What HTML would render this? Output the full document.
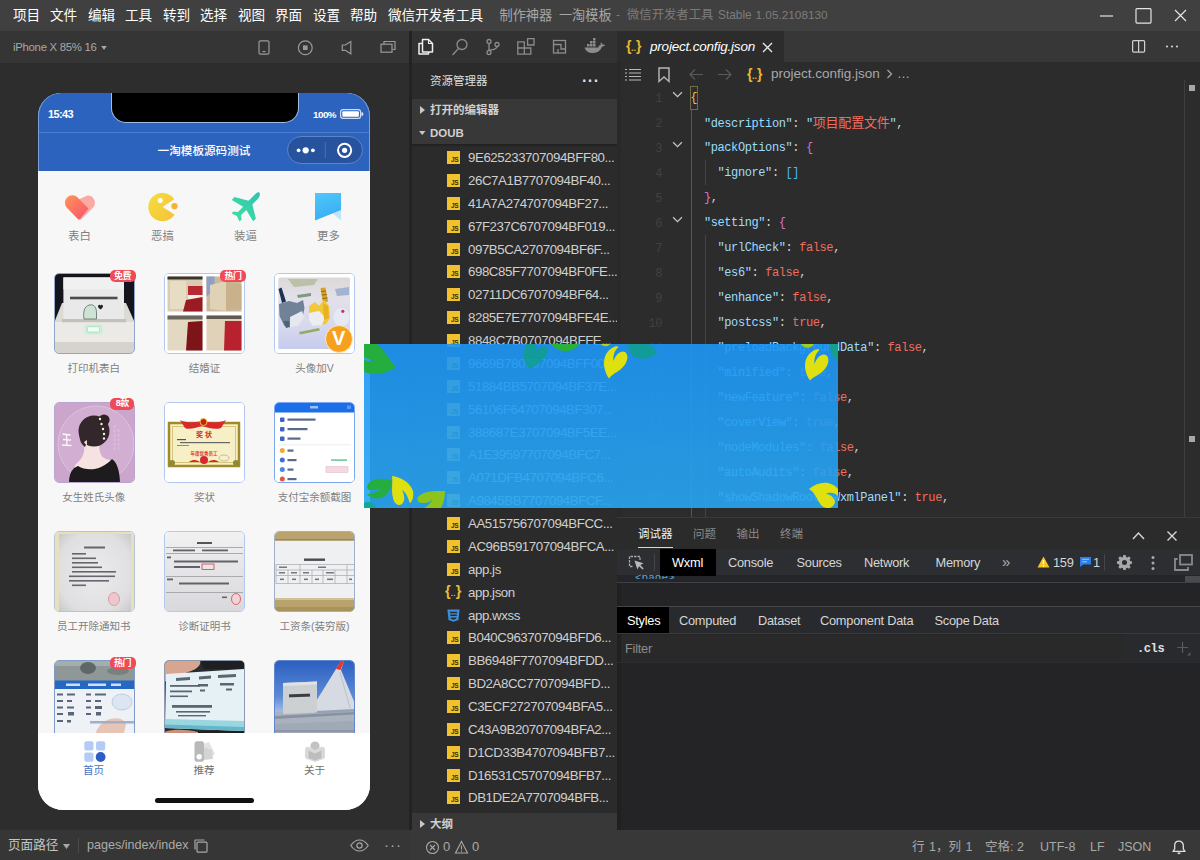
<!DOCTYPE html>
<html lang="zh-CN">
<head>
<meta charset="utf-8">
<title>微信开发者工具</title>
<style>
*{box-sizing:border-box;margin:0;padding:0}
html,body{width:1200px;height:860px;overflow:hidden;background:#2b2b2b}
body{font-family:"Liberation Sans","Noto Sans CJK SC",sans-serif;color:#ccc;font-size:13px;position:relative}
.abs,.abs>*,.frow>*,.cl>*{position:absolute}
i{font-style:normal}
svg{display:block;overflow:visible}
#menubar{left:0;top:0;width:1200px;height:31px;background:#404040}
#menubar span{top:0;line-height:31px;font-size:13.6px;color:#fff;white-space:nowrap}
#menubar span.t{color:#9a9a9a}
#simbar{left:0;top:31px;width:410px;height:32px;background:#353535}
#sim{left:0;top:63px;width:410px;height:767px;background:#2d2d2d}
#divider{left:409px;top:31px;width:3px;height:799px;background:#232323}
#side{left:412px;top:31px;width:205px;height:799px;background:#2b2b2b;overflow:hidden}
#editor{left:617px;top:31px;width:583px;height:486px;background:#2c2c2c;overflow:hidden}
#debug{left:617px;top:517px;width:583px;height:313px;background:#242426;overflow:hidden}
#simstatus{left:0;top:830px;width:410px;height:30px;background:#363636}
#status{left:410px;top:830px;width:790px;height:30px;background:#383838}
/* simulator */
#phone{left:38px;top:93px;width:332px;height:717px;border-radius:23px 23px 25px 25px;background:#f7f7f7;overflow:hidden}
#pstat{left:0;top:0;width:332px;height:40px;background:#2c63be;border-bottom:1px solid #4b7dd0}
#pnav{left:0;top:40px;width:332px;height:38px;background:#2c63be}
#notch{left:74px;top:-2px;width:186px;height:31px;background:#000;border-radius:0 0 14px 14px;box-shadow:0 0 0 1px #a4bde8}
.plabel{font-size:10.5px;color:#808080;white-space:nowrap;transform:translateX(-50%);line-height:14px}
.card{width:81px;height:81px;border-radius:5px;border:1px solid #b3c8ee;background:#fff;overflow:hidden}
.badge{width:26px;height:12px;border-radius:5px 5px 5px 5px;background:#ef4a58;color:#fff;font-size:9px;font-weight:bold;line-height:12px;text-align:center;white-space:nowrap;letter-spacing:-0.5px}
#ptab{left:0;top:640px;width:332px;height:77px;background:#fff}
/* sidebar */
.frow{left:0;width:205px;height:23px;line-height:23px;white-space:nowrap}
.frow .fn{left:56px;top:0;font-size:13.3px;color:#cfcfcf;letter-spacing:-0.44px}
.ijs{left:35px;top:5px;width:13px;height:13px;background:#f2c12e;color:#3a3000;font-size:6.5px;font-weight:bold;line-height:8px;padding:5px 0 0 4px;letter-spacing:-0.3px}
.ijson{left:33px;top:-0.5px;font-size:14.5px;color:#e8bd3c;font-weight:bold;letter-spacing:0px}
.ijson i{font-size:8px;letter-spacing:0.3px;position:relative;top:-0.5px}
.iwx{left:34px;top:4px;width:15px;height:15px}
/* editor */
.cl{left:0;width:583px;height:25px;line-height:25px}
.cl .ln{left:0;top:0.5px;width:45px;text-align:right;color:#414141;font-family:"Liberation Mono",monospace;font-size:12px;letter-spacing:-0.4px}
.cl .fold{left:55px;top:4.5px;width:11px;height:7px}
.cl .ct{top:0;white-space:pre;font-family:"Liberation Mono","Noto Sans CJK SC",monospace;font-size:12px;letter-spacing:-0.4px;color:#d4d4d4;margin-left:-617px}
.ct>*{position:static}
k{color:#9cdcfe}
s{color:#f26d5e;text-decoration:none}
.ct b{font-weight:normal}
b.y{color:#e8c53a}b.p{color:#da70d6}b.bl{color:#4fb5f5}
/* debugger */
.dt{font-size:12.8px;letter-spacing:-0.25px;color:#d6d6d6;white-space:nowrap;line-height:27px;top:0}
</style>
</head>
<body>
<div id="menubar" class="abs">
<span style="left:13px">项目</span><span style="left:50px">文件</span><span style="left:88px">编辑</span><span style="left:125px">工具</span><span style="left:163px">转到</span><span style="left:200px">选择</span><span style="left:238px">视图</span><span style="left:275px">界面</span><span style="left:313px">设置</span><span style="left:350px">帮助</span><span style="left:388px">微信开发者工具</span>
<span class="t" style="left:499.500px;font-size:13.200px;color:#a6a6a6;word-spacing:3px">制作神器 一淘模板</span><span class="t" style="left:616px;font-size:12.400px;color:#7c7c7c">-</span><span class="t" style="left:627px;font-size:12.350px;color:#7c7c7c">微信开发者工具</span><span class="t" style="left:718px;font-size:11.900px;color:#7c7c7c">Stable</span><span class="t" style="left:755.500px;font-size:11.800px;color:#7c7c7c">1.05.2108130</span>
<svg style="left:1098px;top:8px;width:90px;height:16px" viewBox="0 0 90 16"><g fill="none" stroke="#e4e4e4" stroke-width="1.2"><path d="M2 8h13"/><rect x="38" y="0.6" width="15" height="14.5" rx="1"/><path d="M77 2l11 11M88 2L77 13"/></g></svg>
</div>
<div id="simbar" class="abs">
<span style="left:13px;top:1px;line-height:31px;font-size:11.400px;color:#a8a8a8;white-space:nowrap;letter-spacing:-0.300px">iPhone X 85% 16</span><svg style="left:100.500px;top:15px;width:6px;height:4px" viewBox="0 0 7 5"><path d="M0 0h7L3.500 5z" fill="#a8a8a8"/></svg>
<svg style="left:258px;top:9px;width:140px;height:16px" viewBox="0 0 140 16"><g fill="none" stroke="#9a9a9a" stroke-width="1.2">
<rect x="1" y="0.8" width="10" height="13.4" rx="1.5"/><path d="M4.5 11.6h3"/>
<circle cx="47.3" cy="7.7" r="6.9"/><rect x="45" y="5.4" width="4.6" height="4.6" fill="#9a9a9a" stroke="none"/>
<path d="M92.800 1.500v12.300l-5.500-3.500h-3v-5.300h3z"/>
<path d="M126 4.2v-2.7h11v8h-2.6"/><rect x="123" y="4.2" width="11" height="8"/>
</g></svg>
</div>
<div id="sim" class="abs"></div>
<div id="phone" class="abs">
 <div id="pstat"></div>
 <div id="pnav"></div>
 <div id="notch"></div>
 <div style="left:0;top:0;width:332px;height:78px;box-shadow:inset 1px 0 0 #7f9fd8,inset -1px 0 0 #7f9fd8;border-radius:23px 23px 0 0"></div>
 <span style="left:10px;top:14.500px;font-size:11px;font-weight:bold;color:#fff;line-height:13px;letter-spacing:-0.650px">15:43</span>
 <span style="left:275px;top:15px;font-size:9.800px;font-weight:bold;color:#fff;line-height:13px;letter-spacing:-0.500px">100%</span>
 <svg style="left:302px;top:16px;width:24px;height:10px" viewBox="0 0 24 10"><rect x="0.6" y="0.6" width="20" height="8.8" rx="2.4" fill="none" stroke="#cfdcf2" stroke-width="1.2"/><rect x="2.3" y="2.3" width="16.6" height="5.4" rx="1" fill="#fff"/><rect x="21.4" y="3.2" width="1.8" height="3.6" rx="0.9" fill="#dfe8f7"/></svg>
 <span style="left:166px;top:50px;transform:translateX(-50%);font-size:11.6px;color:#fff;line-height:16px;white-space:nowrap;font-weight:500">一淘模板源码测试</span>
 <div style="left:248.5px;top:42.5px;width:76.5px;height:28px;border-radius:14px;background:#27529e;border:1px solid #5d84c8"></div>
 <svg style="left:248.5px;top:42.5px;width:76.5px;height:28px" viewBox="0 0 76.5 28"><path d="M38.3 6v16" stroke="#4a70b8" stroke-width="1"/><circle cx="18.7" cy="14.3" r="3.1" fill="#fff"/><circle cx="11.6" cy="14.3" r="1.9" fill="#fff"/><circle cx="25.9" cy="14.3" r="1.9" fill="#fff"/><circle cx="57.6" cy="14.3" r="6.6" fill="none" stroke="#fff" stroke-width="2"/><circle cx="57.6" cy="14.3" r="2.6" fill="#fff"/></svg>

 <!-- top icon row -->
 <svg style="left:26px;top:101px;width:32px;height:27px" viewBox="0 0 32 27"><defs><linearGradient id="gh" x1="0" y1="0" x2="1" y2="1"><stop offset="0" stop-color="#ff9458"/><stop offset="1" stop-color="#f8516c"/></linearGradient></defs><path d="M23.5 1.5a7.3 7.3 0 0 1 5.2 12.5L16.5 26 14 23.5 9 8z" fill="#f9aaa4"/><path d="M3.1 3.5a7.4 7.4 0 0 1 10.5 0L24.5 14.5 15.8 25.3a1.2 1.2 0 0 1-1.7 0L3.1 14a7.4 7.4 0 0 1 0-10.5z" fill="url(#gh)"/></svg>
 <svg style="left:110px;top:99px;width:31px;height:30px" viewBox="0 0 31 30"><defs><linearGradient id="gp" x1="0" y1="0" x2="1" y2="1"><stop offset="0" stop-color="#f5de3c"/><stop offset="1" stop-color="#f6c13c"/></linearGradient></defs><path d="M14.5 15L26.3 7.2A14.2 14.2 0 1 0 26.6 22.4z" fill="url(#gp)"/><circle cx="26.5" cy="14.2" r="3.1" fill="#f3b32c"/><circle cx="12.2" cy="8.6" r="2.5" fill="#fff"/></svg>
 <svg style="left:192px;top:98px;width:31px;height:31px" viewBox="0 0 31 31"><defs><linearGradient id="ga" x1="1" y1="0" x2="0" y2="1"><stop offset="0" stop-color="#2cc3b4"/><stop offset="1" stop-color="#3fe39d"/></linearGradient></defs><path d="M29.3 1.6c1.4 1.4.2 4.600-1.800 6.600L22.300 13.400l3.600 14.300-2.800 2.500-6.800-11.300-5.200 5.100.5 4.500-2.100 2-2.600-5.400-5.400-2.600 2-2.100 4.500.5 5.100-5.200L1.800 8.900l2.500-2.800L18.600 9.700 23.800 4.500c2-2 4.100-4.300 5.500-2.900z" fill="url(#ga)"/></svg>
 <svg style="left:276px;top:99px;width:28px;height:30px" viewBox="0 0 28 30"><defs><linearGradient id="gb" x1="0" y1="0" x2="0.3" y2="1"><stop offset="0" stop-color="#52c7fa"/><stop offset="1" stop-color="#37aef3"/></linearGradient></defs><path d="M1 1h26v27.500L14 17z" fill="#bfe4f8"/><path d="M1 1h26v17L1 28.500z" fill="url(#gb)"/></svg>
 <span class="plabel" style="left:41.5px;top:136px;font-size:11.400px">表白</span>
 <span class="plabel" style="left:124.5px;top:136px;font-size:11.400px">恶搞</span>
 <span class="plabel" style="left:207.5px;top:136px;font-size:11.400px">装逼</span>
 <span class="plabel" style="left:290.5px;top:136px;font-size:11.400px">更多</span>
 <!-- row 1 -->
 <div class="card" style="left:15.6px;top:180.3px;border-color:#8fa6c8"><svg viewBox="0 0 81 81" width="81" height="81" style="left:-1px;top:-1px;position:absolute">
  <rect width="81" height="81" fill="#14141c"/>
  <path d="M8 30h64l9 20v31H0V50z" fill="#dcdad5"/>
  <rect x="9.400" y="4.400" width="60.600" height="42" fill="#e9e9e9"/>
  <rect x="9.400" y="4.400" width="60.600" height="12" fill="#f0f0f0"/>
  <path d="M0 49h81v20H0z" fill="#eceae6"/>
  <path d="M8 46h64v3.200H8z" fill="#c4c1ba"/>
  <path d="M0 69h81v12H0z" fill="#d6d3ce"/>
  <path d="M0 75Q0 81 6 81H0zM81 75Q81 81 75 81h6z" fill="#2a2a30"/>
  <rect x="16" y="23.700" width="47.500" height="2.600" fill="#4c4c4c"/>
  <path d="M30 46c-1-6 0-13 5.500-14 5-1 7 3 7 8v6z" fill="#cfe3d4" stroke="#6a7a70" stroke-width="0.900"/><path d="M44.200 32.500c.8-1.200 2.300-.6 2.300.5 0-1.100 1.500-1.700 2.300-.5.900 1.500-1.100 3.100-2.300 4.100-1.200-1-3.200-2.600-2.300-4.100z" fill="#222"/>
  <rect x="30.400" y="51.400" width="18.200" height="10" rx="1.800" fill="#cfeeda"/><rect x="33.400" y="53.700" width="12.200" height="5.400" rx="1" fill="#f2fbf5" stroke="#9fdcb6" stroke-width="0.800"/>
 </svg></div>
 <div class="badge" style="left:71.500px;top:176.500px">免费</div>

 <div class="card" style="left:126.100px;top:180.300px"><svg viewBox="0 0 81 81" width="81" height="81" style="left:-1px;top:-1px;position:absolute">
  <rect width="81" height="81" fill="#fff"/>
  <rect x="3.500" y="3.500" width="35" height="35" fill="#d9ccb0"/><rect x="3.500" y="3.500" width="35" height="3" fill="#3a352c"/><path d="M6 8h16v28H6z" fill="#e7dcc4"/><path d="M24 13h14.500v9H24z" fill="#b82832"/><path d="M24 22h14.500v4H24z" fill="#f3efe8"/><path d="M22 27l16.500-3v14.500H19z" fill="#9a1c22"/>
  <rect x="42.500" y="3.500" width="35" height="35" fill="#cbb999"/><path d="M42.500 3.500h8v14l-8 6z" fill="#8fa0c4"/><path d="M46 12l16-4v30l-16-2z" fill="#dfd2b6"/><path d="M62 8l15.500 4v24L62 38z" fill="#c9b18c"/>
  <rect x="3.500" y="42.500" width="35" height="35" fill="#e3d8c2"/><rect x="3.500" y="42.500" width="35" height="4" fill="#6b665c"/><path d="M24 49l14.500-1v29.500H22z" fill="#7d1418"/>
  <rect x="42.500" y="42.500" width="35" height="35" fill="#e0d2b8"/><rect x="42.500" y="42.500" width="35" height="3.500" fill="#5e5a50"/><path d="M61 48h16.500v29.500H60z" fill="#b8222e"/>
 </svg></div>
 <div class="badge" style="left:182px;top:176.500px">热门</div>

 <div class="card" style="left:236.100px;top:180.300px"><svg viewBox="0 0 81 81" width="81" height="81" style="left:-1px;top:-1px;position:absolute">
  <rect width="81" height="81" fill="#fff"/>
  <defs><linearGradient id="gc" x1="0" y1="0" x2="0" y2="1"><stop offset="0" stop-color="#dcd8d8"/><stop offset="0.300" stop-color="#e2e0ea"/><stop offset="0.700" stop-color="#d6d8ee"/><stop offset="1" stop-color="#c6cbee"/></linearGradient><filter id="bl"><feGaussianBlur stdDeviation="0.700"/></filter></defs>
  <rect x="4.300" y="4.400" width="71.700" height="71.600" rx="1.500" fill="url(#gc)"/>
  <g filter="url(#bl)">
  <path d="M14 6h30l-4 6-20 2z" fill="#b9c2a8"/><path d="M61 16l14-2v8l-12 1z" fill="#a3b3d2"/><path d="M23 22l14-2 0 3-13 2z" fill="#7f9a80"/>
  <path d="M4.500 16l3-1.500 4.500 14-4 1.500z" fill="#1f3052"/>
  <path d="M5 31l10-3 8 2 6-3 1.500 8-2 10-8 6-10 2-5-10z" fill="#6f8298"/><path d="M16 44l12-6 2 6-6 9-8 1z" fill="#e6e8f0"/><path d="M9 48l6 0 1 6-4 1z" fill="#50627a"/>
  <path d="M46.500 15l5-.500 2.500 14-5 2z" fill="#d8a224"/><path d="M47 18.500l5-.500M47.800 22l5-.500M48.500 25.500l5-.500" stroke="#8a6a18" stroke-width="1"/>
  <path d="M35 33l6-4 4 4 5-6 5 6 1 12-4 6-12 2-5-8z" fill="#f1c83a"/><path d="M35 40l10-2 6 6-3 8-9 1-4-6z" fill="#eceef4"/><path d="M49 30l5 3 1 12-5 2z" fill="#e9b020"/>
  <path d="M59.500 44c0-6 4-9 8-9s8 4 8 9-3 9-8 9-8-3-8-9z" fill="#e6e8f2"/><circle cx="68.800" cy="38.300" r="1.600" fill="#c8325a"/>
  <path d="M25 59l20-4 1 2.500-20 4z" fill="#93ab62"/>
  </g>
 </svg></div>
 <div style="left:287.300px;top:231.500px;width:28px;height:28px;border-radius:14px;background:#f6a01e;border:1.500px solid #fdeab4"></div>
 <span style="left:294px;top:234px;font-size:20px;line-height:23px;font-weight:bold;color:#fff">V</span>

 <span class="plabel" style="left:55.800px;top:267.500px">打印机表白</span>
 <span class="plabel" style="left:166.500px;top:267.500px">结婚证</span>
 <span class="plabel" style="left:276.500px;top:267.500px">头像加V</span>

 <!-- row 2 -->
 <div class="card" style="left:15.600px;top:308.800px;border-color:#b9a6cf"><svg viewBox="0 0 81 81" width="81" height="81" style="left:-1px;top:-1px;position:absolute">
  <rect width="81" height="81" fill="#cca5cd"/>
  <circle cx="42" cy="42" r="38" fill="#d3aed3" stroke="#e0c8e0" stroke-width="0.800"/>
  <path d="M31 38C30 48 31 54 24 60C20 63 20 66 22 69L61 67C61 62 58 58 52 57C46 55 45 48 45 40Z" fill="#f6e3e1"/>
  <path d="M15 81C15 72 18 66 24 64C34 70 48 68 58 57C63 60 66 70 66 81Z" fill="#1d1b1e"/>
  <ellipse cx="40" cy="29" rx="15.500" ry="15.500" fill="#34272b"/><circle cx="50" cy="18" r="5.600" fill="#2e2226"/>
  <path d="M25.500 30C25 38 27 42 31 45L34 38Z" fill="#34272b"/>
  <path d="M30 40c1 2 2 3 3 3l0-5z" fill="#f3d9d6"/>
  <g fill="#f2f0e0"><circle cx="46" cy="17" r="1.200"/><circle cx="47.500" cy="22" r="1.200"/><circle cx="49" cy="27" r="1.200"/><circle cx="50" cy="32" r="1.200"/><circle cx="50" cy="36.500" r="1.200"/></g>
  <path d="M8.500 32l8 1M9 37.500l8 .5M8 43l9.500 .5M12.500 32.500l.5 10.500" stroke="#fff" stroke-width="1.300" fill="none" opacity="0.900"/>
  <path d="M60.500 23v26M64.500 27v20" stroke="#dcbcdc" stroke-width="1.600" stroke-dasharray="3 1.500"/>
 </svg></div>
 <div class="badge" style="left:72.300px;top:305.200px;width:24px;height:11.500px;line-height:11.500px">8款</div>

 <div class="card" style="left:126.100px;top:308.800px"><svg viewBox="0 0 81 81" width="81" height="81" style="left:-1px;top:-1px;position:absolute">
  <rect width="81" height="81" fill="#fff"/>
  <rect x="5" y="21" width="70" height="43" fill="#f7efc6" stroke="#a08a2a" stroke-width="2.500"/>
  <rect x="8.500" y="24.500" width="63" height="36" fill="none" stroke="#cdbb6a" stroke-width="0.800"/>
  <path d="M16 18c8 4 16 2 22 1 6 1 16 3 24-1l-5 8c-6 2-12 0-19-2-7 2-13 4-17 2z" fill="#d8282c"/><circle cx="39.500" cy="20" r="3.500" fill="#c8201f" stroke="#e9c24a" stroke-width="1"/>
  <text x="40" y="34.500" text-anchor="middle" font-size="7" font-weight="bold" fill="#d02a2a" font-family="Liberation Sans,Noto Sans CJK SC,sans-serif">奖 状</text>
  <rect x="13" y="37" width="9" height="1.200" fill="#555"/><rect x="16" y="40" width="50" height="1.200" fill="#666"/><rect x="13" y="43" width="12" height="1" fill="#888"/>
  <text x="40" y="52.500" text-anchor="middle" font-size="4.500" font-weight="bold" fill="#d43a2a" font-family="Liberation Sans,Noto Sans CJK SC,sans-serif">年度优秀员工</text>
  <circle cx="40" cy="58" r="4" fill="#d8282c"/><path d="M25 60c4-3 8-2 11 0zM44 60c3-2 7-3 11 0z" fill="#d8282c"/>
  <circle cx="8" cy="61" r="3" fill="#8d8a3a"/><circle cx="72" cy="61" r="3" fill="#8d8a3a"/>
  <ellipse cx="60" cy="56" rx="5" ry="3" fill="none" stroke="#b9b0a0" stroke-width="0.800"/>
 </svg></div>

 <div class="card" style="left:236.100px;top:308.800px;border-color:#7fa6ee"><svg viewBox="0 0 81 81" width="81" height="81" style="left:-1px;top:-1px;position:absolute">
  <rect width="81" height="81" fill="#fff"/>
  <rect width="81" height="10.500" fill="#1b6fe8"/><rect x="36" y="4" width="8" height="2.500" fill="#9cc0f6"/><rect x="73" y="3.500" width="4" height="3.500" fill="#5c97ef"/>
  <g fill="#3a62c8"><rect x="6" y="15.500" width="4.500" height="4.500" rx="1"/><rect x="6" y="25" width="4.500" height="4.500" rx="1"/><rect x="6" y="34.500" width="4.500" height="4.500" rx="1"/></g>
  <g fill="#5a6a8a"><rect x="13.500" y="16.500" width="28" height="2.200"/><rect x="13.500" y="26" width="20" height="2.200"/><rect x="13.500" y="35.500" width="13" height="2.200"/></g>
  <rect x="4" y="42.500" width="73" height="0.800" fill="#e6e8ee"/>
  <circle cx="8.300" cy="48.500" r="2.500" fill="#f2a83a"/><circle cx="8.300" cy="58" r="2.500" fill="#3d6fd6"/><circle cx="8.300" cy="67.500" r="2.500" fill="#4a86e8"/><circle cx="8.300" cy="77" r="2.500" fill="#e0583a"/>
  <g fill="#5a6a8a"><rect x="13.500" y="47.500" width="6" height="2.200"/><rect x="13.500" y="57" width="9" height="2.200"/><rect x="13.500" y="66.500" width="6" height="2.200"/><rect x="13.500" y="76" width="9" height="2.200"/></g>
  <rect x="57" y="57.200" width="16" height="1.800" fill="#7ccfa4"/><rect x="52" y="64.500" width="22" height="6" fill="#f3d9e2" stroke="#e8bccb" stroke-width="0.600"/>
 </svg></div>

 <span class="plabel" style="left:55.800px;top:396.500px">女生姓氏头像</span>
 <span class="plabel" style="left:166.500px;top:396.500px">奖状</span>
 <span class="plabel" style="left:276.500px;top:396.500px">支付宝余额截图</span>
 <!-- row 3 -->
 <div class="card" style="left:15.6px;top:438px;border-color:#b7c3d6"><svg viewBox="0 0 81 81" width="81" height="81" style="left:-1px;top:-1px;position:absolute">
  <defs><filter id="bl2"><feGaussianBlur stdDeviation="0.400"/></filter><radialGradient id="gn" cx="0.5" cy="0.5" r="0.7"><stop offset="0" stop-color="#ececee"/><stop offset="0.750" stop-color="#dfdfe1"/><stop offset="1" stop-color="#c9c9cc"/></radialGradient></defs>
  <rect width="81" height="81" fill="#e6e0bc"/>
  <rect x="5" y="3" width="72" height="77" fill="url(#gn)"/>
  <g fill="#66666c" filter="url(#bl2)"><rect x="30" y="15.500" width="21" height="2"/><rect x="18" y="22" width="14" height="1.600"/><rect x="18" y="26.500" width="24" height="1.600"/><rect x="18" y="31" width="26" height="1.600"/><rect x="18" y="35.500" width="30" height="1.600"/><rect x="18" y="40" width="44" height="1.600"/><rect x="15" y="44.500" width="46" height="1.600"/><rect x="15" y="49" width="40" height="1.600"/><rect x="18" y="53.500" width="14" height="1.600"/></g>
  <ellipse cx="60" cy="68" rx="5.500" ry="6.500" fill="#ecc8ce" stroke="#dc9aa6" stroke-width="1"/>
 </svg></div>

 <div class="card" style="left:126.100px;top:438px"><svg viewBox="0 0 81 81" width="81" height="81" style="left:-1px;top:-1px;position:absolute">
  <defs><linearGradient id="gd" x1="0" y1="0" x2="0" y2="1"><stop offset="0" stop-color="#f2f2f3"/><stop offset="0.350" stop-color="#e8e8ea"/><stop offset="1" stop-color="#d9d9dd"/></linearGradient></defs>
  <rect width="81" height="81" fill="url(#gd)"/>
  <rect x="33" y="11" width="15" height="2" fill="#555"/>
  <g stroke="#9a9aa0" stroke-width="0.800" fill="none"><path d="M2 16.500h77M2 22.500h77M2 45.500h77M2 61.500h77"/></g>
  <g fill="#62626a" filter="url(#bl2)"><rect x="9" y="18.500" width="22" height="1.800"/><rect x="38" y="18.500" width="26" height="1.800"/><rect x="3" y="25.500" width="4" height="1.800"/><rect x="10" y="29.500" width="64" height="2"/><rect x="10" y="35" width="26" height="2"/><rect x="3" y="47.500" width="6" height="1.800"/><rect x="15" y="51.500" width="50" height="2"/><rect x="58" y="65.500" width="5" height="1.600"/></g>
  <rect x="38" y="33" width="12" height="5.500" fill="none" stroke="#d4505a" stroke-width="0.900"/>
  <ellipse cx="72" cy="68" rx="4.500" ry="5.500" fill="#f1d4d8" stroke="#d9626f" stroke-width="1"/>
 </svg></div>

 <div class="card" style="left:236.100px;top:438px;border-color:#9fb0c8"><svg viewBox="0 0 81 81" width="81" height="81" style="left:-1px;top:-1px;position:absolute">
  <rect width="81" height="81" fill="#eef0f2"/>
  <rect width="81" height="9.500" fill="#b9a46e"/><rect y="8" width="81" height="1.500" fill="#9c8856"/>
  <rect y="67" width="81" height="14" fill="#b8a36c"/><rect y="67" width="81" height="2" fill="#d2c298"/><rect y="76" width="81" height="5" fill="#a8935c"/>
  <rect x="30" y="27.500" width="21" height="2.400" fill="#4a4a50"/>
  <g stroke="#a6a6ac" stroke-width="0.700" fill="none"><path d="M2 33.500h79M2 39h79M2 44.500h79M2 52.500h79M2 33.500v19M26 33.500v19M49 39v13.500M73 33.500v19M14 39v13.500M38 39v13.500M61 39v13.500"/></g>
  <g fill="#77777e"><rect x="5" y="35.500" width="8" height="1.500"/><rect x="44" y="35.500" width="8" height="1.500"/><rect x="5" y="41" width="6" height="1.500"/><rect x="17" y="41" width="6" height="1.500"/><rect x="29" y="41" width="6" height="1.500"/><rect x="52" y="41" width="8" height="1.500"/><rect x="6" y="47.500" width="4" height="1.600"/><rect x="18" y="47.500" width="4" height="1.600"/><rect x="30" y="47.500" width="4" height="1.600"/><rect x="41" y="47.500" width="4" height="1.600"/><rect x="53" y="47.500" width="6" height="1.600"/><rect x="75" y="47.500" width="3" height="1.600"/></g>
 </svg></div>

 <span class="plabel" style="left:55.800px;top:525.500px">员工开除通知书</span>
 <span class="plabel" style="left:166.500px;top:525.500px">诊断证明书</span>
 <span class="plabel" style="left:276.500px;top:525.500px">工资条(装穷版)</span>

 <!-- row 4 -->
 <div class="card" style="left:15.600px;top:567.300px;border-color:#7f9cc8"><svg viewBox="0 0 81 81" width="81" height="81" style="left:-1px;top:-1px;position:absolute">
  <rect width="81" height="81" fill="#eef1f5"/>
  <rect width="81" height="21" fill="#8f9896"/><path d="M0 0h81v6H0z" fill="#a5aeac"/><ellipse cx="34" cy="8" rx="8" ry="6" fill="#5f6867" filter="url(#bl2)"/><ellipse cx="64" cy="11" rx="11" ry="4" fill="#78817f" filter="url(#bl2)"/>
  <rect y="20.500" width="81" height="8.500" fill="#2568c4"/><g fill="#cfe0f6"><rect x="12" y="23.500" width="14" height="2.500"/><rect x="34" y="23.500" width="18" height="2.500"/><rect x="57" y="23.500" width="10" height="2.500"/></g>
  <g fill="#5a6678" filter="url(#bl2)"><rect x="3" y="33.500" width="6" height="2"/><rect x="13" y="33.500" width="8" height="2"/><rect x="32" y="33.500" width="5" height="2"/><rect x="41" y="33.500" width="11" height="2"/><rect x="3" y="40" width="6" height="2"/><rect x="13" y="40" width="5" height="2"/><rect x="32" y="40" width="5" height="2"/><rect x="41" y="40" width="6" height="2"/><rect x="3" y="46.500" width="6" height="2"/><rect x="13" y="46.500" width="7" height="2"/><rect x="32" y="46.500" width="5" height="2"/><rect x="41" y="46" width="7" height="3"/><rect x="3" y="53" width="6" height="2"/><rect x="14" y="52" width="6" height="3.500"/><rect x="32" y="53" width="5" height="2"/><rect x="42" y="52" width="5" height="3.500"/><rect x="3" y="60" width="6" height="2"/><rect x="13" y="60" width="4" height="2.500"/></g>
  <ellipse cx="68" cy="42" rx="10" ry="8" fill="#dbe6f2" stroke="#b4c6dc" stroke-width="0.800"/>
  <path d="M40 81c0-9 6-19 16-22 8-2 14 0 16 5l-4 17z" fill="#e6c4b6"/><path d="M18 81c6-5 16-8 26-7v7z" fill="#dcae9e"/>
  <rect x="36" y="61" width="45" height="2.500" fill="#9fb0c8"/>
 </svg></div>
 <div class="badge" style="left:71.500px;top:563.500px">热门</div>

 <div class="card" style="left:126.100px;top:567.300px;border-color:#8b9ab0"><svg viewBox="0 0 81 81" width="81" height="81" style="left:-1px;top:-1px;position:absolute">
  <rect width="81" height="81" fill="#2a2b2e"/>
  <path d="M0 0h36c2 5-4 10-12 12L0 22z" fill="#d8a690"/><path d="M36 0h45v9H40z" fill="#1e1f22"/>
  <path d="M2 14L80 9v62L1 68z" fill="#e6f1f5"/>
  <path d="M1 59l79 2v8L1 67z" fill="#9ad6e0"/><path d="M1 64.500l79 2.500v4L1 68z" fill="#62b8ca"/>
  <g fill="#5a6670" filter="url(#bl2)"><path d="M12 18l14-1v3l-14 1zM35 16.500l12-1v3l-12 1zM54 15l18-1v3l-18 1z"/><rect x="6" y="25" width="30" height="1.800"/><rect x="34" y="24" width="10" height="2.500"/><rect x="56" y="23" width="14" height="2.500"/><rect x="6" y="30.500" width="22" height="1.800"/><rect x="36" y="29.500" width="5" height="2"/><rect x="62" y="28.500" width="6" height="2"/><rect x="6" y="35.500" width="18" height="1.600"/><rect x="8" y="45" width="40" height="2.800"/><rect x="12" y="51" width="34" height="1.600"/><rect x="14" y="55" width="28" height="1.400"/></g>
  <path d="M0 72c8-3 22-3 34 0v9H0z" fill="#c9907c"/><path d="M34 71h47v10H34z" fill="#1e1f22"/>
 </svg></div>

 <div class="card" style="left:236.100px;top:567.300px;border-color:#5f86cf"><svg viewBox="0 0 81 81" width="81" height="81" style="left:-1px;top:-1px;position:absolute">
  <defs><linearGradient id="gs" x1="0" y1="0" x2="0" y2="1"><stop offset="0" stop-color="#2a5fc0"/><stop offset="0.450" stop-color="#5b8ad6"/><stop offset="0.700" stop-color="#b9cce8"/><stop offset="1" stop-color="#c9d3df"/></linearGradient></defs>
  <rect width="81" height="81" fill="url(#gs)"/>
  <path d="M0 52l81-4v33H0z" fill="#aab2bd"/><path d="M0 56l81-4v2.500L0 59z" fill="#8892a2"/><path d="M0 64l81-3v20H0z" fill="#a0a9b5"/><path d="M0 70h81v2H0z" fill="#8c96a6"/>
  <path d="M41 43L62 9l5-8h3l-3 9 14 34v6l-40 2z" fill="#d5dae3"/><path d="M62 9l5-8.500 3.500-.5-4 10z" fill="#e4372e"/><path d="M41 51l40-2v2.500l-40 2z" fill="#98a2b2"/><path d="M66 12l10 36" stroke="#b3bac8" stroke-width="0.800"/>
  <path d="M9 23l34-1.500 0 31-34 1.500z" fill="#cdd0d3"/><path d="M9 23l34-1.500v3l-34 1.500z" fill="#dfe1e3"/><rect x="15" y="34" width="21" height="3" fill="#3a3c42" transform="rotate(-2 25 35)" filter="url(#bl2)"/>
 </svg></div>
 <div id="ptab"></div>
 <svg style="left:45.500px;top:648px;width:22px;height:21px" viewBox="0 0 22 21"><g fill="#b4cbf6"><rect x="0.300" y="0.300" width="9.200" height="9.200" rx="2"/><rect x="12" y="0.300" width="9.200" height="9.200" rx="2"/><rect x="0.300" y="11.500" width="9.200" height="9.200" rx="2"/></g><circle cx="16.600" cy="16" r="4.900" fill="#2c5fc1"/></svg>
 <svg style="left:155.500px;top:648px;width:22px;height:21px" viewBox="0 0 22 21"><path d="M9 3l6-2 6 12-6 4z" fill="#e3e3e3"/><path d="M9 6l9 3 1 9-10 1z" fill="#d4d4d4"/><rect x="0.500" y="0.300" width="9.500" height="20.400" rx="2.500" fill="#b9b9b9"/><circle cx="5.200" cy="15.800" r="2.700" fill="#fff"/></svg>
 <svg style="left:266px;top:648px;width:22px;height:21px" viewBox="0 0 22 21"><circle cx="11" cy="5" r="4.600" fill="#c2c2c2"/><path d="M1 8.500c0-2 2-3 4-2.500l6 3 6-3c2-.5 4 .5 4 2.500v7c0 1.500-1 2.500-2.500 2.800L11 21l-7.500-2.700C2 18 1 17 1 15.500z" fill="#d9d9d9"/><path d="M4.500 9.500l6.500 3 6.500-3v7.500l-6.500 2.600-6.500-2.600z" fill="#bdbdbd"/></svg>
 <span class="plabel" style="left:55.500px;top:670px;color:#4873c6;font-size:10.600px">首页</span>
 <span class="plabel" style="left:166px;top:670px;font-size:10.600px;color:#707070">推荐</span>
 <span class="plabel" style="left:276.500px;top:670px;font-size:10.600px;color:#707070">关于</span>
 <div style="left:116.500px;top:705px;width:99px;height:5px;border-radius:3px;background:#111"></div>
</div>
<div id="simstatus" class="abs">
 <span style="left:8px;top:0;line-height:30px;font-size:12.600px;color:#c4c4c4;white-space:nowrap">页面路径</span>
 <svg style="left:62.500px;top:13.500px;width:7px;height:5px" viewBox="0 0 7 5"><path d="M0 0h7L3.500 5z" fill="#a8a8a8"/></svg>
 <div style="left:78px;top:8px;width:1px;height:15px;background:#4a4a4a"></div>
 <span style="left:87px;top:0;line-height:30px;font-size:12.600px;color:#ababab;white-space:nowrap">pages/index/index</span>
 <svg style="left:194px;top:9px;width:14px;height:14px" viewBox="0 0 14 14"><g fill="none" stroke="#a8a8a8" stroke-width="1.200"><rect x="3" y="3.200" width="10" height="10" rx="1"/><path d="M1 10.500V1.800a.8.800 0 0 1 .8-.8h8.700"/></g></svg>
 <svg style="left:350px;top:9px;width:19px;height:13px" viewBox="0 0 19 13"><path d="M.8 6.500C3.500 2.500 6.500 1 9.500 1s6 1.500 8.700 5.500C15.500 10.500 12.500 12 9.500 12S3.500 10.500.8 6.500z" fill="none" stroke="#a8a8a8" stroke-width="1.200"/><circle cx="9.500" cy="6.500" r="2.600" fill="none" stroke="#a8a8a8" stroke-width="1.200"/></svg>
 <span style="left:384px;top:0px;line-height:30px;font-size:15px;color:#aaa;letter-spacing:1px">···</span>
</div>
<div id="side" class="abs">
 <div style="left:0;top:0;width:205px;height:32px;background:#323232"></div>
 <svg style="left:0;top:0;width:205px;height:32px" viewBox="0 0 205 32">
  <g fill="none" stroke="#f0f0f0" stroke-width="1.500" stroke-linejoin="round"><path d="M10.500 8.500h6l4 4v8.500h-10z"/><path d="M16.500 8.500v4h4" stroke-width="1.100"/><path d="M10.500 12.500H7v10.500h9.500v-2"/></g>
  <g fill="none" stroke="#8c8c8c" stroke-width="1.300"><circle cx="50" cy="13.500" r="5"/><path d="M46.500 17.500l-6 6.500"/>
   <circle cx="77" cy="10.500" r="2"/><circle cx="77" cy="21.500" r="2"/><circle cx="85" cy="13.500" r="2"/><path d="M77 12.500v7M85 15.500c0 3-4 3-8 4"/>
   <path d="M105.800 10.800h6.500v6.200h-6.500zM105.800 17h6.500v6.200h-6.500zM112.300 17h6.500v6.200h-6.500zM115.600 7.600h6.400v6.400h-6.400z"/>
   <rect x="141.500" y="9.500" width="12" height="12.500"/><path d="M141.500 13.500h7.500v4.500h4.500M146 22v-4"/>
  </g>
  <path d="M172.500 16.500h13.800c.5-1.800 1.200-2.200 2.500-2.400-.4-.8-.4-1.700.2-2.600.9.600 1.400 1.300 1.500 2.100 1.100-.3 2 .0 2.600.5-.6 1.100-1.700 1.500-3 1.500-1.500 4.200-4.500 6.400-9 6.400-4.800 0-7.600-2-8.600-5.500zM175 13h2.500v2.500H175zM178 13h2.500v2.500H178zM181 13h2.500v2.500H181zM178 10h2.500v2.500H178zM181 10h2.500v2.500H181zM181 7h2.500v2.500H181z" fill="#8c8c8c"/>
 </svg>
 <span style="left:18px;top:42px;font-size:11.500px;line-height:16px;color:#dedede;white-space:nowrap">资源管理器</span>
 <span style="left:170px;top:35.500px;font-size:16px;line-height:28px;color:#ddd;letter-spacing:.5px;font-weight:bold">···</span>
 <div style="left:0;top:68px;width:205px;height:45px;background:#383838"></div>
 <div style="left:0;top:113px;width:205px;height:3px;background:linear-gradient(#1f1f1f,#2b2b2b)"></div>
 <svg style="left:7.500px;top:74.500px;width:5px;height:8px" viewBox="0 0 5 8"><path d="M0 0l5 4-5 4z" fill="#c8c8c8"/></svg>
 <span style="left:18px;top:71px;font-size:11.500px;line-height:16px;color:#d0d0d0;font-weight:bold;white-space:nowrap">打开的编辑器</span>
 <svg style="left:6.500px;top:100px;width:6.500px;height:4px" viewBox="0 0 8 5"><path d="M0 0h8L4 5z" fill="#c8c8c8"/></svg>
 <span style="left:18px;top:94px;font-size:11.500px;line-height:16px;color:#d0d0d0;font-weight:bold;white-space:nowrap">DOUB</span>
 <div class="abs" style="left:0;top:-31px;width:205px;height:860px">
<div class="frow" style="top:146.10px"><span class="ijs">JS</span><span class="fn">9E625233707094BFF80...</span></div>
<div class="frow" style="top:168.97px"><span class="ijs">JS</span><span class="fn">26C7A1B7707094BF40...</span></div>
<div class="frow" style="top:191.84px"><span class="ijs">JS</span><span class="fn">41A7A274707094BF27...</span></div>
<div class="frow" style="top:214.71px"><span class="ijs">JS</span><span class="fn">67F237C6707094BF019...</span></div>
<div class="frow" style="top:237.58px"><span class="ijs">JS</span><span class="fn">097B5CA2707094BF6F...</span></div>
<div class="frow" style="top:260.45px"><span class="ijs">JS</span><span class="fn">698C85F7707094BF0FE...</span></div>
<div class="frow" style="top:283.32px"><span class="ijs">JS</span><span class="fn">02711DC6707094BF64...</span></div>
<div class="frow" style="top:306.19px"><span class="ijs">JS</span><span class="fn">8285E7E7707094BFE4E...</span></div>
<div class="frow" style="top:329.06px"><span class="ijs">JS</span><span class="fn">8848C7B0707094BFFE...</span></div>
<div class="frow" style="top:351.93px"><span class="ijs">JS</span><span class="fn">9669B780707094BFF00...</span></div>
<div class="frow" style="top:374.80px"><span class="ijs">JS</span><span class="fn">51884BB5707094BF37E...</span></div>
<div class="frow" style="top:397.67px"><span class="ijs">JS</span><span class="fn">56106F64707094BF307...</span></div>
<div class="frow" style="top:420.54px"><span class="ijs">JS</span><span class="fn">388687E3707094BF5EE...</span></div>
<div class="frow" style="top:443.41px"><span class="ijs">JS</span><span class="fn">A1E39597707094BFC7...</span></div>
<div class="frow" style="top:466.28px"><span class="ijs">JS</span><span class="fn">A071DFB4707094BFC6...</span></div>
<div class="frow" style="top:489.15px"><span class="ijs">JS</span><span class="fn">A9845BB7707094BFCF...</span></div>
<div class="frow" style="top:512.02px"><span class="ijs">JS</span><span class="fn">AA515756707094BFCC...</span></div>
<div class="frow" style="top:534.89px"><span class="ijs">JS</span><span class="fn">AC96B591707094BFCA...</span></div>
<div class="frow" style="top:557.76px"><span class="ijs">JS</span><span class="fn">app.js</span></div>
<div class="frow" style="top:580.63px"><span class="ijson">{<i>..</i>}</span><span class="fn">app.json</span></div>
<div class="frow" style="top:603.50px"><svg class="iwx" viewBox="0 0 16 16"><path d="M1.5 1.5h13l-1.2 11.2L8 14.6l-5.3-1.9z" fill="#3c8fdc"/><path d="M4.2 4h7.6v1.6H4.2zM4.6 7h6.9v1.6H4.6zM5 10h6.1l-.2 1.4L8 12.4l-2.9-1z" fill="#2c2c2c"/></svg><span class="fn">app.wxss</span></div>
<div class="frow" style="top:626.37px"><span class="ijs">JS</span><span class="fn">B040C963707094BFD6...</span></div>
<div class="frow" style="top:649.24px"><span class="ijs">JS</span><span class="fn">BB6948F7707094BFDD...</span></div>
<div class="frow" style="top:672.11px"><span class="ijs">JS</span><span class="fn">BD2A8CC7707094BFD...</span></div>
<div class="frow" style="top:694.98px"><span class="ijs">JS</span><span class="fn">C3ECF272707094BFA5...</span></div>
<div class="frow" style="top:717.85px"><span class="ijs">JS</span><span class="fn">C43A9B20707094BFA2...</span></div>
<div class="frow" style="top:740.72px"><span class="ijs">JS</span><span class="fn">D1CD33B4707094BFB7...</span></div>
<div class="frow" style="top:763.59px"><span class="ijs">JS</span><span class="fn">D16531C5707094BFB7...</span></div>
<div class="frow" style="top:786.46px"><span class="ijs">JS</span><span class="fn">DB1DE2A7707094BFB...</span></div> </div>
 <div style="left:0;top:782px;width:205px;height:23px;background:#383838"></div>
 <svg style="left:7.500px;top:789px;width:5px;height:8px" viewBox="0 0 5 8"><path d="M0 0l5 4-5 4z" fill="#c8c8c8"/></svg>
 <span style="left:18px;top:785px;font-size:11.500px;line-height:16px;color:#d0d0d0;font-weight:bold;white-space:nowrap">大纲</span>
</div>
<div id="divider" class="abs"></div>
<div id="editor" class="abs">
 <div style="left:0;top:0;width:583px;height:31px;background:#373737"></div>
 <div style="left:0;top:0;width:167px;height:31px;background:#2c2c2c"></div>
 <span style="left:9px;top:0;line-height:30px;font-size:14px;font-weight:bold;color:#e8b830;letter-spacing:-0.500px;white-space:nowrap">{<i style="font-size:9px;letter-spacing:0">..</i>}</span>
 <span style="left:33px;top:0;line-height:31px;font-size:13.500px;font-style:italic;color:#fff;white-space:nowrap;letter-spacing:-0.200px">project.config.json</span>
 <svg style="left:145px;top:10.500px;width:11px;height:11px" viewBox="0 0 11 11"><path d="M1 1l9 9M10 1l-9 9" stroke="#e8e8e8" stroke-width="1.400" fill="none"/></svg>
 <svg style="left:514.500px;top:9px;width:50px;height:14px" viewBox="0 0 50 14"><g fill="none" stroke="#d0d0d0" stroke-width="1.200"><rect x="0.600" y="0.600" width="12" height="11.500" rx="1"/><path d="M6.600 0.600v11.500"/></g><g fill="#d0d0d0"><circle cx="35" cy="6.500" r="1.100"/><circle cx="40" cy="6.500" r="1.100"/><circle cx="45" cy="6.500" r="1.100"/></g></svg>
 <!-- breadcrumb -->
 <svg style="left:8px;top:36px;width:120px;height:16px" viewBox="0 0 120 16"><g stroke="#b8b8b8" stroke-width="1.200" fill="none"><path d="M4 2.500h12M4 6h12M4 9.500h12M4 13h12"/><path d="M0 2.500h2M0 6h2M0 9.500h2M0 13h2"/><path d="M34 1h10v13.500l-5-4.500-5 4.500z" stroke-width="1.400"/></g><g stroke="#5a5a5a" stroke-width="1.200" fill="none"><path d="M78 7.500H65M70 2.500l-5 5 5 5"/><path d="M93 7.500h13M101 2.500l5 5-5 5"/></g></svg>
 <span style="left:130px;top:31px;line-height:24px;font-size:14px;font-weight:bold;color:#e8b830;letter-spacing:-0.500px;white-space:nowrap">{<i style="font-size:9px;letter-spacing:0">..</i>}</span>
 <span style="left:154px;top:31px;line-height:24px;font-size:13.500px;color:#a8a8a8;white-space:nowrap;letter-spacing:0px">project.config.json</span>
 <svg style="left:269px;top:38px;width:7px;height:10px" viewBox="0 0 7 10"><path d="M1.500 1l4 4-4 4" stroke="#a8a8a8" stroke-width="1.200" fill="none"/></svg>
 <span style="left:280px;top:31px;line-height:24px;font-size:13px;color:#a8a8a8">…</span>
 <div style="left:0;top:31px;width:4px;height:455px;background:#292929"></div>
 <!-- guides -->
 <div style="left:74px;top:79px;width:1px;height:407px;background:#555"></div>
 <div style="left:88px;top:129px;width:1px;height:25px;background:#444"></div>
 <div style="left:88px;top:204px;width:1px;height:300px;background:#444"></div>
 <div style="left:72.500px;top:54.500px;width:8px;height:24px;border:1px solid #6e6a4a"></div>
 <div style="left:567px;top:49px;width:1px;height:437px;background:#3e3e3e"></div>
 <div style="left:572px;top:54px;width:6px;height:6px;background:#a8a8a8"></div>
 <div style="left:572px;top:405px;width:6px;height:6px;background:#a8a8a8"></div>
 <div class="abs" style="left:0;top:-31px;width:583px;height:600px">
<div class="cl" style="top:86.0px"><span class="ln">1</span><svg class="fold" viewBox="0 0 12 8"><path d="M1 1.5l5 5 5-5" fill="none" stroke="#c5c5c5" stroke-width="1.5"/></svg><span class="ct" style="left:690.3px"><b class="y">{</b></span></div>
<div class="cl" style="top:111.0px"><span class="ln">2</span><span class="ct" style="left:703.9px"><k>"description"</k>: <k>"</k><s style="font-size:13px;letter-spacing:-0.2px">项目配置文件</s><k>"</k>,</span></div>
<div class="cl" style="top:136.0px"><span class="ln">3</span><svg class="fold" viewBox="0 0 12 8"><path d="M1 1.5l5 5 5-5" fill="none" stroke="#c5c5c5" stroke-width="1.5"/></svg><span class="ct" style="left:703.9px"><k>"packOptions"</k>: <b class="p">{</b></span></div>
<div class="cl" style="top:161.0px"><span class="ln">4</span><span class="ct" style="left:717.5px"><k>"ignore"</k>: <b class="bl">[]</b></span></div>
<div class="cl" style="top:186.0px"><span class="ln">5</span><span class="ct" style="left:703.9px"><b class="p">}</b>,</span></div>
<div class="cl" style="top:211.0px"><span class="ln">6</span><svg class="fold" viewBox="0 0 12 8"><path d="M1 1.5l5 5 5-5" fill="none" stroke="#c5c5c5" stroke-width="1.5"/></svg><span class="ct" style="left:703.9px"><k>"setting"</k>: <b class="p">{</b></span></div>
<div class="cl" style="top:236.0px"><span class="ln">7</span><span class="ct" style="left:717.5px"><k>"urlCheck"</k>: <s>false</s>,</span></div>
<div class="cl" style="top:261.0px"><span class="ln">8</span><span class="ct" style="left:717.5px"><k>"es6"</k>: <s>false</s>,</span></div>
<div class="cl" style="top:286.0px"><span class="ln">9</span><span class="ct" style="left:717.5px"><k>"enhance"</k>: <s>false</s>,</span></div>
<div class="cl" style="top:311.0px"><span class="ln">10</span><span class="ct" style="left:717.5px"><k>"postcss"</k>: <s>true</s>,</span></div>
<div class="cl" style="top:336.0px"><span class="ln">11</span><span class="ct" style="left:717.5px"><k>"preloadBackgroundData"</k>: <s>false</s>,</span></div>
<div class="cl" style="top:361.0px"><span class="ln">12</span><span class="ct" style="left:717.5px"><k>"minified"</k>: <s>true</s>,</span></div>
<div class="cl" style="top:386.0px"><span class="ln">13</span><span class="ct" style="left:717.5px"><k>"newFeature"</k>: <s>false</s>,</span></div>
<div class="cl" style="top:411.0px"><span class="ln">14</span><span class="ct" style="left:717.5px"><k>"coverView"</k>: <s>true</s>,</span></div>
<div class="cl" style="top:436.0px"><span class="ln">15</span><span class="ct" style="left:717.5px"><k>"nodeModules"</k>: <s>false</s>,</span></div>
<div class="cl" style="top:461.0px"><span class="ln">16</span><span class="ct" style="left:717.5px"><k>"autoAudits"</k>: <s>false</s>,</span></div>
<div class="cl" style="top:486.0px"><span class="ln">17</span><span class="ct" style="left:717.5px"><k>"showShadowRootInWxmlPanel"</k>: <s>true</s>,</span></div> </div>
</div>
<div id="debug" class="abs">
 <div style="left:0;top:0;width:4px;height:313px;background:#202021"></div>
 <div style="left:0;top:0;width:583px;height:32px;background:#2b2b2b;border-top:1px solid #3a3a3a"></div>
 <span style="left:21px;top:9px;font-size:11.500px;line-height:16px;color:#f0f0f0;white-space:nowrap">调试器</span>
 <div style="left:21px;top:30px;width:35px;height:1px;background:#d8d8d8"></div>
 <span style="left:76px;top:9px;font-size:11.500px;line-height:16px;color:#8a8a8a;white-space:nowrap">问题</span>
 <span style="left:119.500px;top:9px;font-size:11.500px;line-height:16px;color:#8a8a8a;white-space:nowrap">输出</span>
 <span style="left:163px;top:9px;font-size:11.500px;line-height:16px;color:#8a8a8a;white-space:nowrap">终端</span>
 <svg style="left:515px;top:14px;width:46px;height:10px" viewBox="0 0 46 10"><g fill="none" stroke="#d8d8d8" stroke-width="1.400"><path d="M1 8l5.500-6L12 8"/><path d="M35.500 0.500l9 9M44.500 0.500l-9 9"/></g></svg>
 <!-- devtools toolbar -->
 <div style="left:0;top:32px;width:583px;height:27px;background:#2d2e31"></div>
 <div style="left:0;top:58px;width:583px;height:8px;background:#242528;border-bottom:1px solid #404145"></div>
 <div style="left:568px;top:59px;width:15px;height:6px;background:#494a4d"></div>
 <span style="left:18px;top:56px;font-family:'Liberation Mono',monospace;font-size:11px;line-height:10px;height:6px;overflow:hidden;color:#5da3cf">&lt;page&gt;</span>
 <svg style="left:11px;top:38px;width:16px;height:16px" viewBox="0 0 16 16"><path d="M12 5V1.500H1.500V11.500H5" fill="none" stroke="#a8a8a8" stroke-width="1.300" stroke-dasharray="2.500 1"/><path d="M6.500 5.500l2.800 9 1.800-3.300 3.400 3.400 1.200-1.200-3.400-3.400 3.200-1.700z" fill="#b8b8b8"/></svg>
 <div style="left:37px;top:37px;width:1px;height:17px;background:#454545"></div>
 <div style="left:43px;top:32px;width:56px;height:27px;background:#000"></div>
 <span class="dt" style="left:55px;top:32px;color:#fff">Wxml</span>
 <span class="dt" style="left:111px;top:32px">Console</span>
 <span class="dt" style="left:179.500px;top:32px">Sources</span>
 <span class="dt" style="left:247px;top:32px">Network</span>
 <span class="dt" style="left:318.500px;top:32px">Memory</span>
 <span class="dt" style="left:385px;top:31px;font-size:15px;color:#b0b0b0">»</span>
 <svg style="left:420px;top:38.500px;width:13px;height:12px" viewBox="0 0 13 12"><path d="M6.500 0.500l6 11H.5z" fill="#f4c520"/><path d="M6.500 4v4M6.500 9v1.400" stroke="#fff" stroke-width="1.300"/></svg>
 <span class="dt" style="left:436px;top:32px;letter-spacing:-0.300px">159</span>
 <svg style="left:463px;top:39.500px;width:11px;height:10px" viewBox="0 0 11 10"><path d="M0 0h11v7.500H3.500L0 10z" fill="#2b7de9"/><path d="M2 2.300h7M2 4.800h5" stroke="#9cc6ff" stroke-width="1"/></svg>
 <span class="dt" style="left:476px;top:32px">1</span>
 <div style="left:487px;top:37px;width:1px;height:17px;background:#454545"></div>
 <svg style="left:499.500px;top:37.500px;width:15px;height:15px" viewBox="0 0 16 16"><path d="M6.700 0h2.600l.4 2.100 1.300.6 1.800-1.200 1.800 1.800-1.200 1.800.6 1.300 2 .400v2.600l-2.100.4-.5 1.300 1.200 1.800-1.800 1.800-1.800-1.200-1.300.6-.4 2H6.700l-.4-2.100-1.300-.5-1.800 1.200-1.800-1.800 1.200-1.800-.6-1.300L0 9.300V6.700l2.100-.4.500-1.300L1.400 3.200l1.800-1.800L5 2.600l1.300-.5zM8 5.300a2.700 2.700 0 1 0 0 5.400 2.700 2.700 0 0 0 0-5.400z" fill="#a8a8a8" fill-rule="evenodd"/></svg>
 <svg style="left:534px;top:38px;width:4px;height:16px" viewBox="0 0 4 16"><g fill="#a8a8a8"><circle cx="2" cy="2.500" r="1.500"/><circle cx="2" cy="8" r="1.500"/><circle cx="2" cy="13.500" r="1.500"/></g></svg>
 <svg style="left:557px;top:37px;width:19px;height:17px" viewBox="0 0 19 17"><g fill="none" stroke="#8a8a8a" stroke-width="1.800"><rect x="6" y="1" width="12" height="9.500"/><path d="M3.500 5H1v11h13v-3"/></g></svg>
 <!-- styles row -->
 <div style="left:0;top:89px;width:583px;height:28px;background:#292a2d;border-top:1px solid #44464a;border-bottom:1px solid #3a3b3f"></div>
 <div style="left:0;top:90px;width:52px;height:26px;background:#000"></div>
 <span class="dt" style="left:10px;top:90px;color:#fff">Styles</span>
 <span class="dt" style="left:62px;top:90px">Computed</span>
 <span class="dt" style="left:141px;top:90px">Dataset</span>
 <span class="dt" style="left:203px;top:90px">Component Data</span>
 <span class="dt" style="left:317.500px;top:90px">Scope Data</span>
 <!-- filter row -->
 <div style="left:4px;top:118px;width:504px;height:27px;background:#29292a"></div>
 <div style="left:508px;top:117px;width:75px;height:28px;background:#292a2d"></div>
 <div style="left:0;top:145px;width:583px;height:1px;background:#2c2d30"></div>
 <span class="dt" style="left:8px;top:118px;color:#8c8c8c">Filter</span>
 <span style="left:520px;top:118px;font-family:'Liberation Mono',monospace;font-weight:bold;font-size:12px;line-height:28px;color:#e0e0e0;letter-spacing:-0.400px">.cls</span>
 <svg style="left:560px;top:125px;width:14px;height:14px" viewBox="0 0 14 14"><path d="M5.500 0v11M0 5.500h11" stroke="#5a5a5a" stroke-width="1.200"/><path d="M13.500 10v3.500H10z" fill="#5a5a5a"/></svg>
</div>
<div id="status" class="abs">
 <svg style="left:16px;top:9.500px;width:60px;height:15px" viewBox="0 0 60 15"><g fill="none" stroke="#a8a8a8" stroke-width="1.100"><circle cx="6.500" cy="7.500" r="6"/><path d="M4 5l5 5M9 5l-5 5"/><path d="M35.500 1.500l6 11.500h-12z"/><path d="M35.500 5.500v4M35.500 10.500v1.300"/></g></svg>
 <span style="left:33px;top:5px;line-height:24px;font-size:13px;color:#a8a8a8">0</span>
 <span style="left:62px;top:5px;line-height:24px;font-size:13px;color:#a8a8a8">0</span>
 <span style="left:502px;top:5px;line-height:24px;font-size:12.500px;color:#a8a8a8;white-space:nowrap;word-spacing:1px">行 1，列 1</span>
 <span style="left:575px;top:5px;line-height:24px;font-size:12.500px;color:#a8a8a8;white-space:nowrap">空格: 2</span>
 <span style="left:630px;top:5px;line-height:24px;font-size:12.500px;color:#a8a8a8;white-space:nowrap">UTF-8</span>
 <span style="left:680px;top:5px;line-height:24px;font-size:12.500px;color:#a8a8a8;white-space:nowrap">LF</span>
 <span style="left:708px;top:5px;line-height:24px;font-size:12.500px;color:#a8a8a8;white-space:nowrap">JSON</span>
 <svg style="left:762px;top:10px;width:14px;height:15px" viewBox="0 0 14 15"><path d="M7 1.200c-2.600 0-4.300 1.900-4.300 4.400v3.200L1.200 11.300h11.600l-1.500-2.500V5.600c0-2.500-1.700-4.400-4.300-4.400z" fill="none" stroke="#e0e0e0" stroke-width="1.300"/><path d="M5.300 12.500a1.700 1.700 0 0 0 3.400 0z" fill="#e0e0e0"/></svg>
</div>
<div id="ov" class="abs" style="left:364px;top:344px;width:474px;height:164px;background:linear-gradient(rgba(28,150,246,.9),rgba(40,166,242,.9));overflow:hidden">
<svg style="left:-364px;top:-344px;width:1200px;height:860px" viewBox="0 0 1200 860">
 <path d="M364 344H377C384 349 389 360 396 367C388 373 374 376 364 372V359.500C368 361.500 372 362 375 361.500C371 360 367 358.500 364 357Z" fill="#25ad3e"/>
 <path d="M529 369C522 360 522 350 527 344H536C537 347 536 350 535 353C538 348 542 345 548 347C549 356 540 364 529 369Z" fill="#0fa08a" opacity="0.820"/>
 <path d="M551 344H579C574 352 560 355 551 344Z" fill="#2ab03c"/>
 <path d="M601 344H610C608 347 603 347 601 344Z" fill="#b4d420"/>
 <path id="yl" d="M609 378.500C602 368 602 354 612 348C615 346 618 346 618.500 347C614 351 613 356 613.500 361C616 354 621 350 625 352C629 355 628 362 622 368C618 372 612 374 609 378.500Z" fill="#dfe010"/>
 <path d="M628 344H650C653 347 655 350 657 353C650 359 638 362 631 354C629 350 628 347 628 344Z" fill="#0fa08a" opacity="0.820"/>
 <path d="M801 344H814C811 349 804 349 801 344Z" fill="#9fce1e"/>
 <path d="M810 380.500C803 370 803 357 813 351C816 349 819 349 819.500 350C815 354 814 359 814.500 364C817 357 822 353 826 355C830 358 829 365 823 371C819 375 813 377 810 380.500Z" fill="#dfe010"/>
 <path d="M829 344H838V362C833 358 830 350 829 344Z" fill="#14a08a"/>
 <path d="M809 489C815 484 822 482 828 483C832 484 836 486 838 489V496C835 493 830 492 826 493.500C831 495 834.500 498 835 502C834 506 831 508 828 508C824 508 821 506 819 502C816 497 814 492 809 489Z" fill="#dfe010"/>
 <path d="M392 481C386 478 374 477 368 484C366 488 367 490 372 490C376 490 379 489 381 488C378 492 372 494 367 494C372 500 382 500 387 494C390 490 391 486 392 481Z" fill="#25ad3e"/>
 <path d="M392 476C400 477 410 482 413 491C414 497 412 502 410 503C408 500 408 494 402 490C404 494 406 500 402 504C398 507 394 503 393 498C391 490 393 482 392 476Z" fill="#dfe010"/>
 <path d="M445 491C438 491 424 490 418 497C416 501 419 503 424 503C428 503 431 501 432 499C431 503 428 506 424 508H441C444 502 445 496 445 491Z" fill="#8cc41c"/>
 <path d="M364 503C368 501 374 502 376 508H364Z" fill="#12a898"/>
</svg>
</div>
</body>
</html>
